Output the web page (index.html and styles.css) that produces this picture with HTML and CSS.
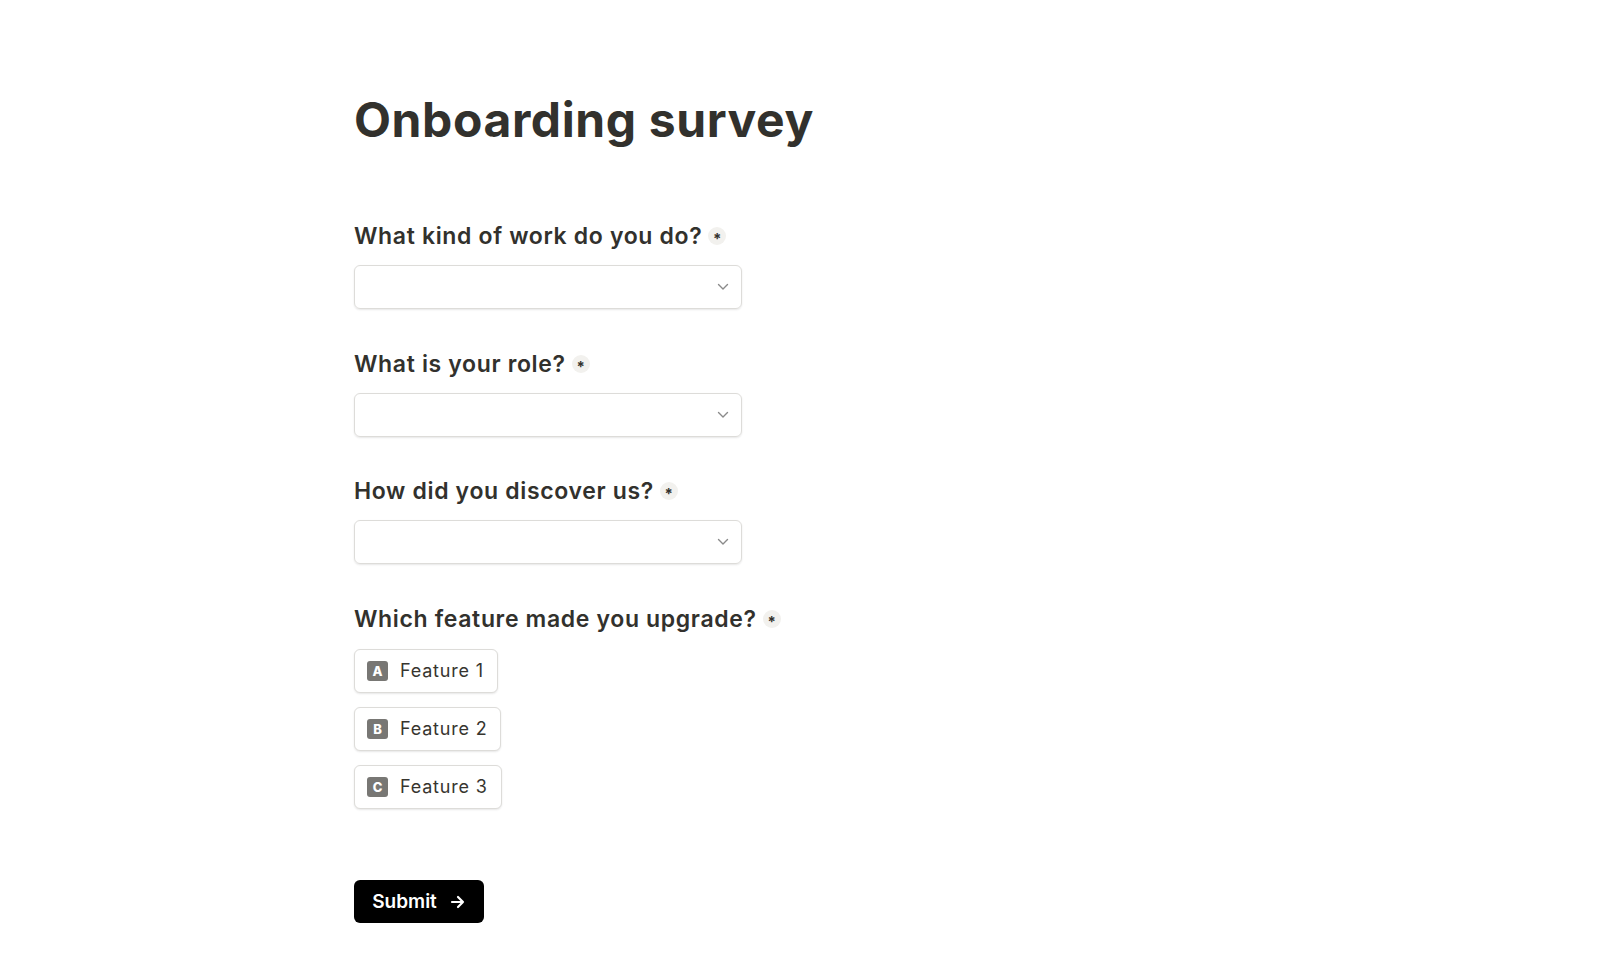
FILE: index.html
```html
<!DOCTYPE html>
<html lang="en">
<head>
  <meta charset="UTF-8">
  <meta name="viewport" content="width=device-width, initial-scale=1.0">
  <title>Onboarding survey</title>
  <link rel="stylesheet" href="styles.css">
</head>
<body>

  <main class="survey">
    <h1>Onboarding survey</h1>

    <div class="field">
      <label class="question">What kind of work do you do? <span class="required">*</span></label>
      <div class="select">
        <svg class="chevron" width="12" height="8" viewBox="0 0 12 8"><path d="M1.5 1.5 L6 6 L10.5 1.5" fill="none" stroke="#8a8a8a" stroke-width="1.4" stroke-linecap="round" stroke-linejoin="round"/></svg>
      </div>
    </div>

    <div class="field">
      <label class="question">What is your role? <span class="required">*</span></label>
      <div class="select">
        <svg class="chevron" width="12" height="8" viewBox="0 0 12 8"><path d="M1.5 1.5 L6 6 L10.5 1.5" fill="none" stroke="#8a8a8a" stroke-width="1.4" stroke-linecap="round" stroke-linejoin="round"/></svg>
      </div>
    </div>

    <div class="field">
      <label class="question">How did you discover us? <span class="required">*</span></label>
      <div class="select">
        <svg class="chevron" width="12" height="8" viewBox="0 0 12 8"><path d="M1.5 1.5 L6 6 L10.5 1.5" fill="none" stroke="#8a8a8a" stroke-width="1.4" stroke-linecap="round" stroke-linejoin="round"/></svg>
      </div>
    </div>

    <div class="field">
      <label class="question">Which feature made you upgrade? <span class="required">*</span></label>
      <div class="options">
        <button class="option"><span class="key">A</span>Feature 1</button>
        <button class="option"><span class="key">B</span>Feature 2</button>
        <button class="option"><span class="key">C</span>Feature 3</button>
      </div>
    </div>

    <button class="submit">Submit
      <svg width="16" height="14" viewBox="0 0 16 14"><path d="M2 7 H13 M8 2 L13 7 L8 12" fill="none" stroke="#fff" stroke-width="2.2" stroke-linecap="round" stroke-linejoin="round"/></svg>
    </button>
  </main>

</body>
</html>
```

FILE: styles.css
```css
body {
  margin: 0;
  background-color: #fff;
  color: #37352f;
  font-family: Inter, "Noto Sans", sans-serif;
}

.survey {
  width: 892px;
  margin: 0 auto;
  padding-top: 91px;
  display: flex;
  flex-direction: column;
  align-items: flex-start;
}

h1 {
  margin: 0 0 73px;
  font-size: 48px;
  line-height: 58px;
  font-weight: 700;
  letter-spacing: 0.6px;
  color: #32312d;
}

.field {
  display: flex;
  flex-direction: column;
  align-items: flex-start;
  gap: 15px;
  margin-bottom: 40.5px;
}

.question {
  display: flex;
  align-items: center;
  gap: 6px;
  font-size: 23px;
  line-height: 28px;
  font-weight: 600;
  letter-spacing: 0.65px;
  color: #32312d;
}

.required {
  width: 18px;
  height: 18px;
  border-radius: 50%;
  background-color: #f2f1ee;
  font-size: 15px;
  line-height: 24px;
  letter-spacing: 0;
  text-align: center;
  font-weight: 700;
}

.select {
  width: 388px;
  height: 44px;
  border: 1px solid #dddcd9;
  border-radius: 6px;
  box-shadow: 0 1px 2px rgba(15, 15, 15, 0.1);
  display: flex;
  align-items: center;
  justify-content: flex-end;
  padding-right: 12px;
  box-sizing: border-box;
}

.options {
  display: flex;
  flex-direction: column;
  align-items: flex-start;
  gap: 14px;
  margin-top: 1px;
  margin-bottom: 31px;
}

.option {
  height: 44px;
  display: flex;
  align-items: center;
  gap: 12px;
  padding: 0 13px 0 12px;
  background-color: #fff;
  border: 1px solid #dddcd9;
  border-radius: 6px;
  box-shadow: 0 1px 2px rgba(15, 15, 15, 0.1);
  font-family: Inter, "Noto Sans", sans-serif;
  font-size: 18px;
  letter-spacing: 0.8px;
  color: #37352f;
}

.key {
  width: 21px;
  height: 20px;
  border-radius: 3px;
  background-color: #787774;
  color: #fff;
  font-size: 13px;
  font-weight: 800;
  line-height: 20px;
  letter-spacing: 0;
  text-align: center;
}

.submit {
  height: 43px;
  width: 130px;
  display: flex;
  align-items: center;
  justify-content: center;
  gap: 13px;
  background-color: #000;
  color: #fff;
  border: none;
  border-radius: 6px;
  font-family: Inter, "Noto Sans", sans-serif;
  font-size: 19px;
  font-weight: 600;
}
```
